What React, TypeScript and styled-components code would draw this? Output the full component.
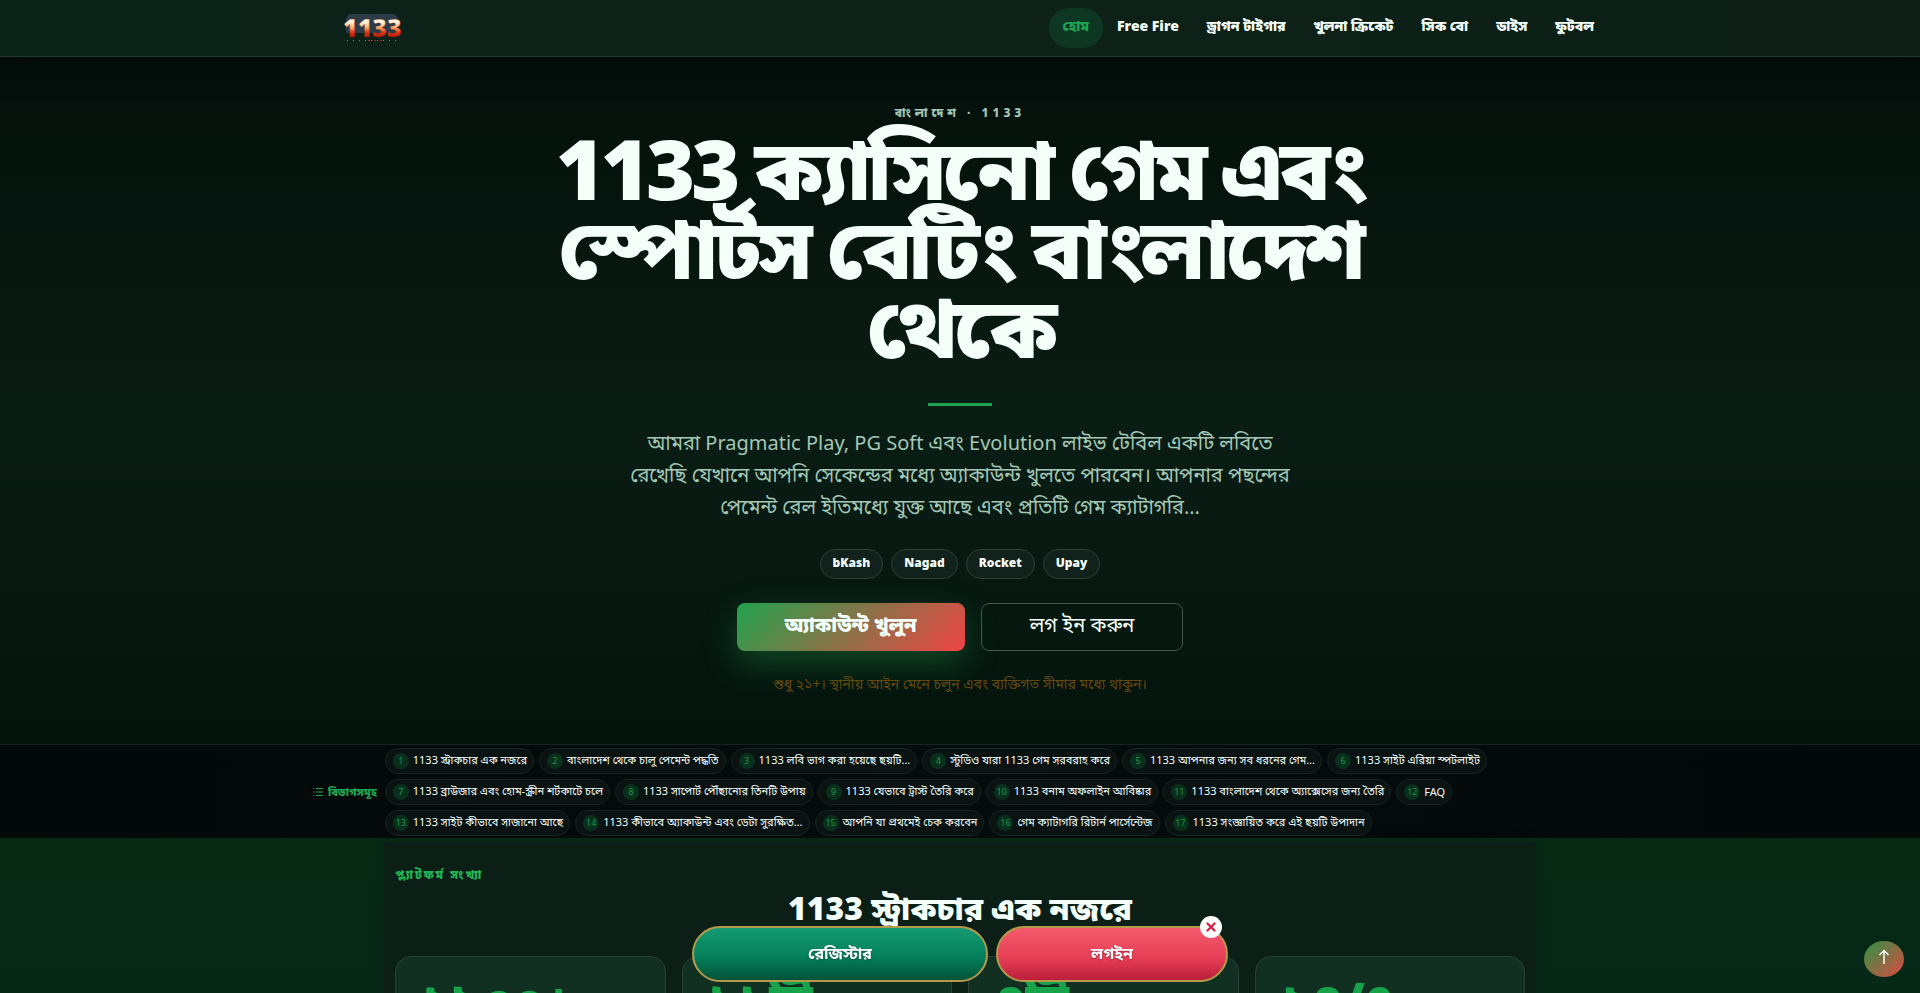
import React from 'react';
import styled, { createGlobalStyle, css } from 'styled-components';
import { List, X } from 'lucide-react';

const Global = createGlobalStyle`
  * { box-sizing: border-box; }
  body {
    margin: 0;
    background: #06241a;
    color: #f4fffa;
    font-family: "Noto Sans", "Noto Sans Bengali", sans-serif;
    overflow: hidden;
    height: 100vh;
  }
  a { color: inherit; text-decoration: none; }
  button { font-family: inherit; cursor: pointer; }
`;

const Header = styled.header`
  height: 57px;
  background: linear-gradient(90deg, #0c2319, #0d1f17);
  border-bottom: 1px solid #25392f;
  box-shadow: 0 8px 32px rgba(0, 0, 0, 0.4);
  position: relative;
`;
const HeaderInner = styled.div`
  max-width: 1360px;
  height: 56px;
  margin: 0 auto;
  padding: 0 32px;
  display: flex;
  align-items: center;
  justify-content: space-between;
`;
const LogoLink = styled.a`
  padding-left: 32px;
  display: flex;
`;
const LogoSvg = styled.svg`
  overflow: visible;
`;
const Nav = styled.nav`
  display: flex;
`;
const NavLink = styled.a<{ $active?: boolean }>`
  height: 40px;
  padding: 0 14px;
  border-radius: 20px;
  font-size: 14px;
  font-weight: 900;
  line-height: 36px;
  white-space: nowrap;
  ${(p) => p.$active && css`
    background: #0d3722;
    color: #1ea551;
  `}
`;

const Hero = styled.section`
  padding: 48px 32px 50px;
  display: flex;
  flex-direction: column;
  align-items: center;
  text-align: center;
  background: linear-gradient(180deg, #030f0a 0%, #0a1d15 52%, #04140d 100%);
`;
const Eyebrow = styled.p`
  margin: 0;
  font-size: 12px;
  line-height: 16px;
  font-weight: 800;
  letter-spacing: 4px;
  color: #a3c7b5;
`;
const Title = styled.h1`
  margin: 7px 0 0;
  max-width: 860px;
  font-size: 84px;
  line-height: 79px;
  font-weight: 900;
  letter-spacing: -4px;
`;
const Divider = styled.hr`
  width: 64px;
  height: 3px;
  margin: 38px 0 21px;
  border: 0;
  background: #1fa152;
`;
const Lead = styled.p`
  margin: 0;
  max-width: 680px;
  font-size: 20px;
  line-height: 32px;
  color: #a3c7b5;
`;
const Payments = styled.ul`
  display: flex;
  gap: 8px;
  list-style: none;
  margin: 26px 0 24px;
  padding: 0;
`;
const Payment = styled.li`
  height: 30px;
  padding: 0 12px;
  border: 1px solid #2f4038;
  border-radius: 15px;
  background: #11211b;
  font-size: 12px;
  line-height: 26px;
  font-weight: 900;
`;
const Actions = styled.div`
  display: flex;
  gap: 16px;
`;
const Action = styled.button<{ $primary?: boolean }>`
  height: 48px;
  padding: 0 48px 4px;
  border-radius: 8px;
  border: 1px solid #46554d;
  background: transparent;
  color: #f4fffa;
  font-size: 20px;
  ${(p) => p.$primary && css`
    border: 0;
    font-weight: 900;
    background: linear-gradient(135deg, #22a24d, #ef4444);
    box-shadow: 0 12px 32px rgba(34, 162, 77, 0.35);
  `}
`;
const Notice = styled.p`
  margin: 23px 0 0;
  font-size: 14px;
  line-height: 20px;
  color: #63480f;
`;

const Sections = styled.nav`
  border-top: 1px solid #17251f;
  background: linear-gradient(90deg, #030909, #050c0d 50%, #030909);
`;
const SectionsInner = styled.div`
  max-width: 1360px;
  margin: 0 auto;
  padding: 3px 32px 2px;
  display: flex;
  align-items: center;
  gap: 8px;
`;
const SectionsLabel = styled.span`
  display: flex;
  align-items: center;
  gap: 4px;
  flex: none;
  font-size: 11px;
  font-weight: 900;
  color: #1ea551;
`;
const ChipList = styled.ol`
  display: flex;
  flex-wrap: wrap;
  gap: 5px;
  list-style: none;
  margin: 0;
  padding: 0;
  max-width: 1152px;
`;
const Chip = styled.a`
  height: 26px;
  padding: 0 6px 0 7px;
  display: flex;
  align-items: center;
  gap: 4px;
  border: 1px solid #172420;
  border-radius: 13px;
  background: #0a1212;
  font-size: 11px;
  white-space: nowrap;
`;
const ChipText = styled.span`
  padding-bottom: 2px;
`;
const ChipNumber = styled.span`
  width: 16px;
  height: 16px;
  border-radius: 8px;
  background: #09301c;
  color: #1c9a4c;
  font-size: 9px;
  line-height: 15px;
  text-align: center;
`;

const Stats = styled.section`
  background: linear-gradient(180deg, #062a14, #06241a);
  padding-top: 4px;
`;
const StatsPanel = styled.div`
  max-width: 1152px;
  margin: 0 auto;
  padding: 23px 11px 48px;
  background: #0c1f17;
  box-shadow: 0 0 8px rgba(12, 31, 23, 0.6);
`;
const StatsEyebrow = styled.p`
  margin: 0;
  font-size: 12px;
  line-height: 20px;
  font-weight: 900;
  letter-spacing: 2px;
  color: #22b455;
`;
const StatsTitle = styled.h2`
  margin: 3px 0 28px;
  font-size: 32px;
  line-height: 40px;
  font-weight: 900;
  text-align: center;
`;
const CardGrid = styled.div`
  display: grid;
  grid-template-columns: repeat(4, 1fr);
  gap: 16px;
`;
const Card = styled.article`
  height: 180px;
  padding: 11px 26px;
  border: 1px solid #274136;
  border-radius: 16px;
  background: #123022;
`;
const CardValue = styled.strong`
  display: block;
  font-size: 51px;
  line-height: 64px;
  font-weight: 900;
  letter-spacing: -1px;
  color: #16a34a;
`;

const Dock = styled.div`
  position: fixed;
  left: 50%;
  bottom: 11px;
  transform: translateX(-50%);
  display: flex;
  gap: 8px;
`;
const DockButton = styled.button<{ $tone: 'green' | 'red' }>`
  width: ${(p) => (p.$tone === 'green' ? 296 : 232)}px;
  height: 56px;
  border: 2px solid #b39a4c;
  border-radius: 28px;
  color: #fff;
  font-size: 16px;
  font-weight: 700;
  text-shadow: 0 1px 2px rgba(0, 0, 0, 0.35);
  background: ${(p) => (p.$tone === 'green'
    ? 'linear-gradient(180deg, #159a72, #04805b 55%, #035239)'
    : 'linear-gradient(180deg, #f45a6c, #e63d55 60%, #bb1e3a)')};
`;
const DockClose = styled.button`
  position: absolute;
  top: -10px;
  right: 6px;
  width: 22px;
  height: 22px;
  padding: 0;
  display: flex;
  align-items: center;
  justify-content: center;
  border: 0;
  border-radius: 50%;
  background: #fff;
  color: #d62246;
`;
const ToTop = styled.button`
  position: fixed;
  right: 16px;
  bottom: 16px;
  width: 40px;
  height: 36px;
  padding: 0 0 4px;
  display: flex;
  align-items: center;
  justify-content: center;
  border: 0;
  border-radius: 50%;
  color: #f4fffa;
  background: linear-gradient(135deg, #2c9447, #dc4a40);
`;

const nav = ['হোম', 'Free Fire', 'ড্রাগন টাইগার', 'খুলনা ক্রিকেট', 'সিক বো', 'ডাইস', 'ফুটবল'];
const payments = ['bKash', 'Nagad', 'Rocket', 'Upay'];
const sections = [
  '1133 স্ট্রাকচার এক নজরে',
  'বাংলাদেশ থেকে চালু পেমেন্ট পদ্ধতি',
  '1133 লবি ভাগ করা হয়েছে ছয়টি…',
  'স্টুডিও যারা 1133 গেম সরবরাহ করে',
  '1133 আপনার জন্য সব ধরনের গেম…',
  '1133 সাইট এরিয়া স্পটলাইট',
  '1133 ব্রাউজার এবং হোম-স্ক্রীন শর্টকাটে চলে',
  '1133 সাপোর্ট পৌঁছানোর তিনটি উপায়',
  '1133 যেভাবে ট্রাস্ট তৈরি করে',
  '1133 বনাম অফলাইন আবিষ্কার',
  '1133 বাংলাদেশ থেকে অ্যাক্সেসের জন্য তৈরি',
  'FAQ',
  '1133 সাইট কীভাবে সাজানো আছে',
  '1133 কীভাবে অ্যাকাউন্ট এবং ডেটা সুরক্ষিত…',
  'আপনি যা প্রথমেই চেক করবেন',
  'গেম ক্যাটাগরি রিটার্ন পার্সেন্টেজ',
  '1133 সংজ্ঞায়িত করে এই ছয়টি উপাদান',
];
const stats = ['২৯০০+', '১১টি', '৪টি', '২৪/৭'];

const Logo = () => (
  <LogoSvg width="60" height="30" viewBox="0 0 60 30" role="img" aria-label="1133">
    <defs>
      <linearGradient id="fire" gradientUnits="userSpaceOnUse" x1="0" y1="5" x2="0" y2="25">
        <stop offset="0.2" stopColor="#fff6dc" />
        <stop offset="0.5" stopColor="#f9a560" />
        <stop offset="0.7" stopColor="#dd3a1a" />
        <stop offset="1" stopColor="#a81408" />
      </linearGradient>
    </defs>
    <path d="M7 1H48Q52 1 54 6V20H2V6Q4 1 7 1Z" fill="#2c3b48" />
    <text x="-1" y="24" fontFamily="Noto Sans" fontWeight="900" fontSize="25" fill="url(#fire)" stroke="#7c1a10" strokeWidth="0.3">1133</text>
    <path d="M3 27.500H56" stroke="#7d8a80" strokeWidth="1" strokeDasharray="1 5" />
    <path d="M24 27.500H42" stroke="#b3261a" strokeWidth="1" strokeDasharray="2 4" />
  </LogoSvg>
);

const UpArrow = () => (
  <svg width="12" height="16" viewBox="0 0 12 16" fill="none" stroke="currentColor" strokeWidth="1.5" aria-hidden="true">
    <path d="M6 15V1.5M1.5 6L6 1.5L10.5 6" />
  </svg>
);

export default function App() {
  return (
    <>
      <Global />
      <Header>
        <HeaderInner>
          <LogoLink href="#home"><Logo /></LogoLink>
          <Nav>
            {nav.map((label, i) => (
              <NavLink key={label} href="#home" $active={i === 0}>{label}</NavLink>
            ))}
          </Nav>
        </HeaderInner>
      </Header>
      <main>
        <Hero>
          <Eyebrow>বাংলাদেশ · 1133</Eyebrow>
          <Title>1133 ক্যাসিনো গেম এবং স্পোর্টস বেটিং বাংলাদেশ থেকে</Title>
          <Divider />
          <Lead>আমরা Pragmatic Play, PG Soft এবং Evolution লাইভ টেবিল একটি লবিতে রেখেছি যেখানে আপনি সেকেন্ডের মধ্যে অ্যাকাউন্ট খুলতে পারবেন। আপনার পছন্দের পেমেন্ট রেল ইতিমধ্যে যুক্ত আছে এবং প্রতিটি গেম ক্যাটাগরি…</Lead>
          <Payments>
            {payments.map((name) => <Payment key={name}>{name}</Payment>)}
          </Payments>
          <Actions>
            <Action $primary>অ্যাকাউন্ট খুলুন</Action>
            <Action>লগ ইন করুন</Action>
          </Actions>
          <Notice>শুধু ২১+। স্থানীয় আইন মেনে চলুন এবং ব্যক্তিগত সীমার মধ্যে থাকুন।</Notice>
        </Hero>
        <Sections>
          <SectionsInner>
            <SectionsLabel><List size={12} />বিভাগসমূহ</SectionsLabel>
            <ChipList>
              {sections.map((label, i) => (
                <li key={label}>
                  <Chip href="#stats">
                    <ChipNumber>{i + 1}</ChipNumber>
                    <ChipText>{label}</ChipText>
                  </Chip>
                </li>
              ))}
            </ChipList>
          </SectionsInner>
        </Sections>
        <Stats id="stats">
          <StatsPanel>
            <StatsEyebrow>প্ল্যাটফর্ম সংখ্যা</StatsEyebrow>
            <StatsTitle>1133 স্ট্রাকচার এক নজরে</StatsTitle>
            <CardGrid>
              {stats.map((value) => <Card key={value}><CardValue>{value}</CardValue></Card>)}
            </CardGrid>
          </StatsPanel>
        </Stats>
      </main>
      <Dock>
        <DockButton $tone="green">রেজিস্টার</DockButton>
        <DockButton $tone="red">লগইন</DockButton>
        <DockClose aria-label="বন্ধ"><X size={14} strokeWidth={4} /></DockClose>
      </Dock>
      <ToTop aria-label="উপরে"><UpArrow /></ToTop>
    </>
  );
}
